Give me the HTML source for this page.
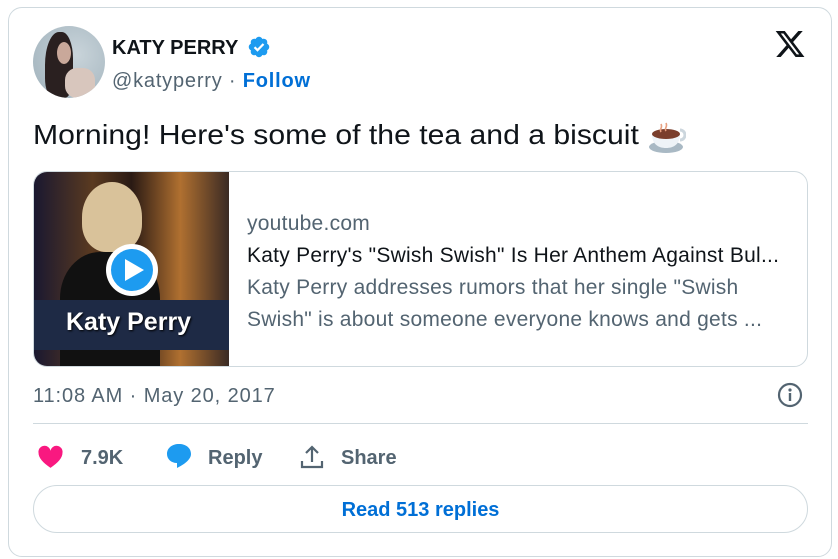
<!DOCTYPE html>
<html><head><meta charset="utf-8"><style>
*{margin:0;padding:0;box-sizing:border-box}
body{width:838px;height:559px;background:#fff;font-family:"Liberation Sans",sans-serif;position:relative;overflow:hidden;color:#0f1419}
.card{position:absolute;left:8px;top:7px;width:824px;height:550px;border:1px solid #cfd9de;border-radius:14px}
.abs{position:absolute;white-space:nowrap}
.grey{color:#536471}
</style></head><body>
<div class="card"></div>
<div class="abs" style="left:33px;top:26px;width:72px;height:72px;border-radius:50%;overflow:hidden;background:radial-gradient(circle at 60% 40%,#c9d4da,#9eb0ba)">
 <div style="position:absolute;left:12px;top:6px;width:28px;height:66px;background:#2a2020;border-radius:50% 40% 30% 30%"></div>
 <div style="position:absolute;left:24px;top:16px;width:14px;height:22px;background:#c9a89a;border-radius:50%"></div>
 <div style="position:absolute;left:32px;top:42px;width:30px;height:30px;background:#d8c6bd;border-radius:40%"></div>
</div>
<div class="abs" style="left:112px;top:37px;font-size:20px;font-weight:bold">KATY PERRY</div>
<svg class="abs" style="left:247px;top:35px" width="24" height="24" viewBox="0 0 24 24"><path fill="#1d9bf0" d="M22.25 12c0-1.43-.88-2.67-2.19-3.34.46-1.390.2-2.9-.81-3.91s-2.52-1.27-3.910-.81c-.66-1.31-1.91-2.19-3.34-2.19s-2.67.88-3.33 2.19c-1.4-.46-2.91-.2-3.92.81s-1.26 2.52-.8 3.91C2.63 9.33 1.75 10.57 1.75 12s.88 2.67 2.2 3.34c-.46 1.39-.21 2.9.8 3.91s2.52 1.26 3.91.81c.67 1.31 1.91 2.19 3.34 2.19s2.68-.88 3.34-2.19c1.39.45 2.9.2 3.91-.81s1.27-2.52.81-3.91c1.31-.67 2.19-1.91 2.19-3.34z"/><path d="M7.5 12.2l3 3 6-6.2" stroke="#fff" stroke-width="2.2" fill="none"/></svg>
<div class="abs grey" style="left:112px;top:70px;font-size:20px;letter-spacing:0.8px">@katyperry · <b style="color:#006fd6">Follow</b></div>
<svg class="abs" style="left:773px;top:28px" width="34" height="32" viewBox="0 0 24 24"><path fill="#0f1419" d="M18.244 2.25h3.308l-7.227 8.26 8.502 11.24H16.17l-5.214-6.817L4.99 21.75H1.68l7.730-8.835L1.254 2.25H8.08l4.713 6.231zm-1.161 17.52h1.833L7.084 4.126H5.117z"/></svg>
<div class="abs" style="left:33px;top:119px;font-size:28px;transform:scaleX(1.077);transform-origin:0 0">Morning! Here's some of the tea and a biscuit</div>
<svg class="abs" style="left:646px;top:116px" width="40" height="40" viewBox="0 0 40 40"><ellipse cx="20" cy="31" rx="17" ry="6" fill="#a9b9c4"/><path d="M6 18h28c0 10-6 14-14 14S6 28 6 18z" fill="#eef3f7"/><ellipse cx="20" cy="18" rx="14" ry="5" fill="#7a3e2c"/><path d="M34 14a5 5 0 010 10" stroke="#ccd6dd" stroke-width="3" fill="none"/><path d="M15 16c-2-3 2-4 0-8M20 15c-2-3 2-4 0-8" stroke="#e8a080" stroke-width="1.6" fill="none"/></svg>
<div class="abs" style="left:33px;top:171px;width:775px;height:196px;border:1px solid #cfd9de;border-radius:14px;overflow:hidden">
 <div style="position:absolute;left:0;top:0;width:195px;height:196px;background:linear-gradient(90deg,#1a1830 0%,#5a3a20 30%,#2a1a14 50%,#b07030 75%,#3a2a24 100%)">
  <div style="position:absolute;left:48px;top:10px;width:60px;height:70px;background:#d9c29a;border-radius:50% 50% 40% 40%"></div>
  <div style="position:absolute;left:26px;top:80px;width:100px;height:116px;background:#111;border-radius:40% 40% 0 0"></div>
  <div style="position:absolute;left:0;top:128px;width:195px;height:50px;background:#1e2a45"></div>
  <div style="position:absolute;left:32px;top:136px;font-size:25px;font-weight:bold;color:#fff;text-shadow:1px 1px 2px #000">Katy Perry</div>
  <div style="position:absolute;left:72px;top:72px;width:52px;height:52px;border-radius:50%;background:#fff"></div>
  <div style="position:absolute;left:77px;top:77px;width:42px;height:42px;border-radius:50%;background:#1d9bf0"></div>
  <svg style="position:absolute;left:88px;top:86px" width="24" height="24" viewBox="0 0 24 24"><path d="M3 1l19 11L3 23z" fill="#fff"/></svg>
 </div>
 <div style="position:absolute;left:213px;top:36px;font-size:21px;line-height:32px;color:#536471;letter-spacing:0.25px">youtube.com<br><span style="color:#0f1419">Katy Perry's "Swish Swish" Is Her Anthem Against Bul...</span><br>Katy Perry addresses rumors that her single "Swish<br>Swish" is about someone everyone knows and gets ...</div>
</div>
<div class="abs grey" style="left:33px;top:385px;font-size:20px;letter-spacing:0.9px">11:08 AM · May 20, 2017</div>
<svg class="abs" style="left:777px;top:382px" width="26" height="26" viewBox="0 0 26 26"><circle cx="13" cy="13" r="11" stroke="#536471" stroke-width="2.2" fill="none"/><circle cx="13" cy="8" r="1.6" fill="#536471"/><rect x="11.8" y="11" width="2.4" height="8" fill="#536471"/></svg>
<div class="abs" style="left:33px;top:423px;width:775px;height:1px;background:#cfd9de"></div>
<svg class="abs" style="left:37px;top:445px" width="27" height="24" viewBox="0 0 24 22"><path fill="#f91880" d="M12 21C5 16 1 12 1 7a5.5 5.5 0 0111-1.5A5.5 5.5 0 0123 7c0 5-4 9-11 14z"/></svg>
<div class="abs grey" style="left:81px;top:447px;font-size:20px;font-weight:bold">7.9K</div>
<svg class="abs" style="left:165px;top:442px" width="28" height="28" viewBox="0 0 28 28"><path fill="#1d9bf0" d="M14 2C7 2 2 6 2 12c0 5 4 9 10 9v5c6-3 14-8 14-14 0-6-5-10-12-10z"/></svg>
<div class="abs grey" style="left:208px;top:447px;font-size:20px;font-weight:bold">Reply</div>
<svg class="abs" style="left:299px;top:444px" width="26" height="26" viewBox="0 0 26 26"><path d="M13 3v15M7 9l6-6 6 6M3 17v6h20v-6" stroke="#536471" stroke-width="2.2" fill="none"/></svg>
<div class="abs grey" style="left:341px;top:447px;font-size:20px;font-weight:bold">Share</div>
<div class="abs" style="left:33px;top:485px;width:775px;height:48px;border:1px solid #cfd9de;border-radius:24px;text-align:center;line-height:48px;font-size:20px;font-weight:bold;color:#006fd6">Read 513 replies</div>
</body></html>
